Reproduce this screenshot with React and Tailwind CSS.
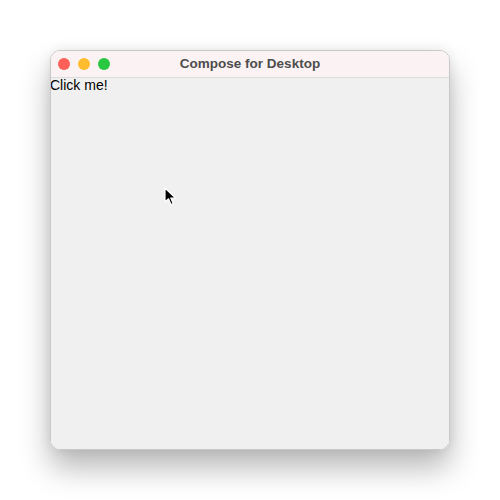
import React from 'react'

const TrafficLights = () => (
  <div className="flex items-center gap-2 pl-[7px]">
    <span className="block w-3 h-3 rounded-full bg-[#fe5f57]" />
    <span className="block w-3 h-3 rounded-full bg-[#febc2e]" />
    <span className="block w-3 h-3 rounded-full bg-[#28c840]" />
  </div>
)

const Cursor = () => (
  <svg width="14" height="20" viewBox="0 0 14 20" className="absolute left-[113px] top-[109px]">
    <path d="M1 1 L1 15 L4.5 11.8 L7 17.5 L9.2 16.5 L6.8 11 L11.5 11 Z" fill="#000" stroke="#fff" strokeWidth="1.2" strokeLinejoin="round" />
  </svg>
)

export default function App() {
  return (
    <div className="w-[500px] h-[500px] bg-white flex items-start justify-center pt-[50px]" style={{ fontFamily: '"Liberation Sans", Arial, sans-serif' }}>
      <div className="w-[400px] h-[400px] rounded-[10px] overflow-hidden flex flex-col border border-[#c8c8c8] shadow-[0_18px_30px_rgba(0,0,0,0.28),0_0_12px_rgba(0,0,0,0.08)]">
        <div className="relative h-[27px] shrink-0 bg-[#fbf3f3] border-b border-[#dcdcdc] flex items-center">
          <TrafficLights />
          <div className="absolute inset-0 flex items-center justify-center text-[13.5px] font-bold text-[#4d4d4d]">
            Compose for Desktop
          </div>
        </div>
        <div className="relative flex-1 bg-[#f0f0f0]">
          <div className="text-[14px] leading-[14px] text-black -ml-px">Click me!</div>
          <Cursor />
        </div>
      </div>
    </div>
  )
}
